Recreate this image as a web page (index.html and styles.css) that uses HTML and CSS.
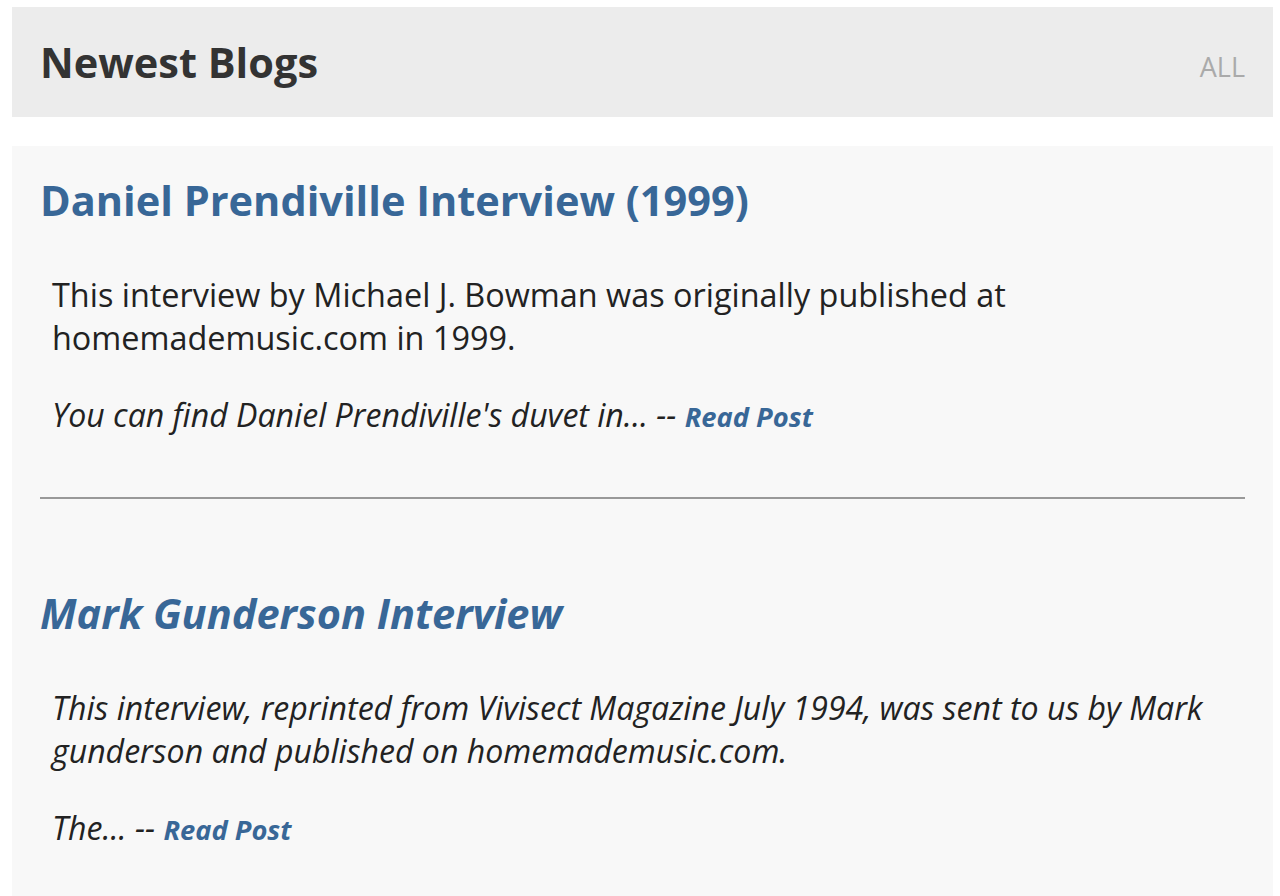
FILE: index.html
```html
<!DOCTYPE html>
<html>
<head>
<meta charset="utf-8">
<link rel="stylesheet" href="styles.css">
</head>
<body>
<div class="page">
  <div class="header">
    <h2 class="header-title">Newest Blogs</h2>
    <a class="header-all">ALL</a>
  </div>
  <div class="content">
    <div class="post">
      <h3 class="post-title">Daniel Prendiville Interview (1999)</h3>
      <p class="post-text">This interview by Michael J. Bowman was originally published at homemademusic.com in 1999.</p>
      <p class="post-text italic">You can find Daniel Prendiville's duvet in... -- <a class="read">Read Post</a></p>
    </div>
    <hr class="divider">
    <div class="post">
      <h3 class="post-title italic">Mark Gunderson Interview</h3>
      <p class="post-text italic">This interview, reprinted from Vivisect Magazine July 1994, was sent to us by Mark gunderson and published on homemademusic.com.</p>
      <p class="post-text italic">The... -- <a class="read">Read Post</a></p>
    </div>
  </div>
</div>
</body>
</html>
```
FILE: styles.css
```css
html, body {
  margin: 0;
  padding: 0;
  background: #ffffff;
  font-family: "Open Sans", "Noto Sans", sans-serif;
}
.page {
  padding: 7px 7px 0 12px;
}
.header {
  height: 110px;
  background: #ececec;
  display: flex;
  align-items: center;
  justify-content: space-between;
  padding: 0 28px 0 28px;
}
.header-title {
  margin: 0;
  font-size: 41.5px;
  font-weight: 700;
  color: #333333;
}
.header-all {
  font-size: 27px;
  color: #aaaaaa;
  padding-top: 8px;
}
.content {
  margin-top: 29px;
  background: #f8f8f8;
  padding: 28px 28px 40px 28px;
  min-height: 700px;
}
.post-title {
  margin: 0 0 47px 0;
  font-size: 41.5px;
  font-weight: 700;
  color: #386797;
  line-height: 52px;
}
.post-text {
  margin: 0 0 34px 12px;
  font-size: 32.4px;
  line-height: 43px;
  color: #222222;
}
.italic {
  font-style: italic;
}
.post-text.italic {
  font-size: 32.1px;
}
.read {
  color: #386797;
  font-weight: 700;
  font-style: italic;
  font-size: 27.3px;
}
.divider {
  border: 0;
  border-top: 2px solid #999999;
  margin: 59px 0 88px 0;
}
```
